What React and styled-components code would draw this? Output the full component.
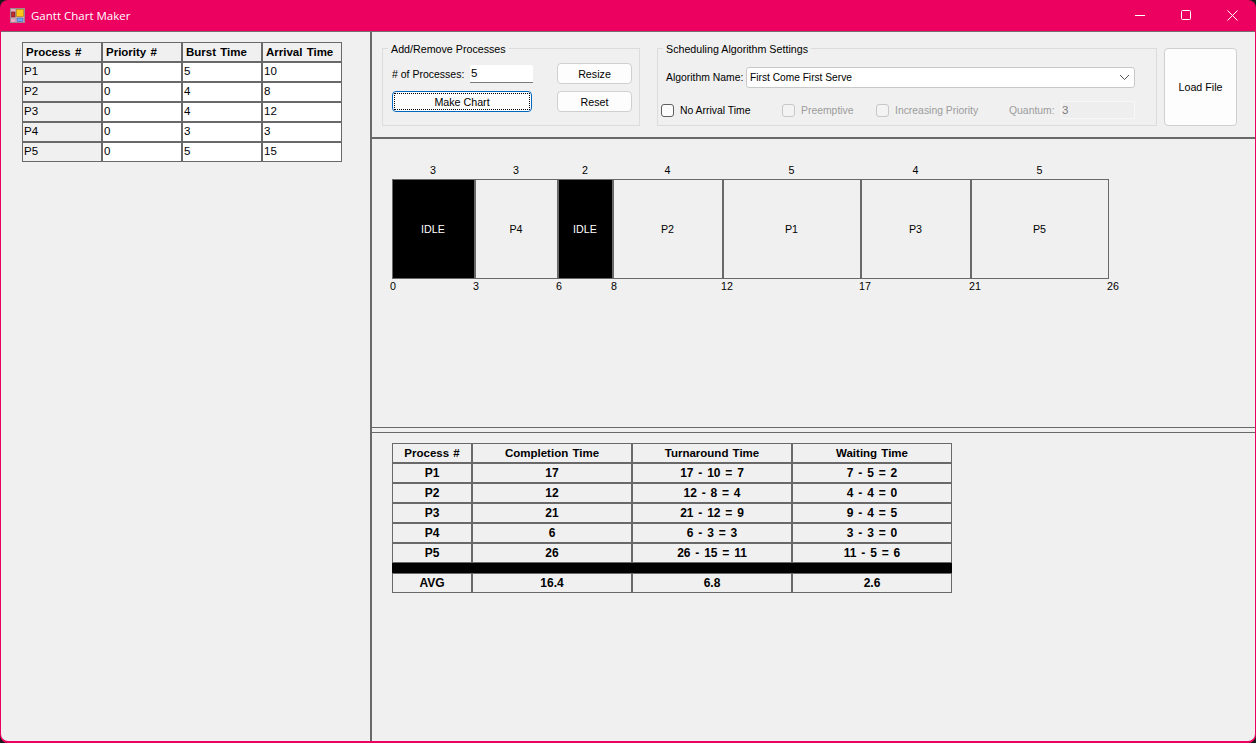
import React from "react";
import styled, { createGlobalStyle } from "styled-components";

const Global = createGlobalStyle`
  html, body { margin: 0; padding: 0; background: #1c1c1c; }
  body { font-family: "Liberation Sans", Arial, sans-serif; font-size: 10.7px; color: #000; }
  * { box-sizing: border-box; }
`;

const Window = styled.div`
  width: 1256px; height: 743px; background: #ec0060; border-radius: 8px;
  display: flex; flex-direction: column; overflow: hidden;
  padding: 0 1px 2px 1px;
`;
const TitleBar = styled.div`
  height: 31px; flex: none; display: flex; align-items: center; color: #fff; padding-left: 9px;
`;
const TitleText = styled.span`
  font-family: "Open Sans", sans-serif; font-size: 11.5px; margin-left: 6px; flex: 1;
`;
const WinButton = styled.div`
  width: 46px; height: 31px; display: flex; align-items: center; justify-content: center;
`;
const Body = styled.div`
  flex: 1; min-height: 0; display: flex; background: #f0f0f0; border-top: 1px solid #7b6a70;
  border-radius: 0 0 7px 7px; overflow: hidden;
`;
const LeftPane = styled.div`
  width: 369px; flex: none; padding: 10px 0 0 21px;
`;
const RightPane = styled.div`
  flex: 1; display: flex; flex-direction: column; border-left: 2px solid #696969;
`;
const TopPanel = styled.div`
  height: 107px; flex: none; display: flex; padding: 16px 0 0 10px; border-bottom: 2px solid #696969;
`;
const Group = styled.div`
  position: relative; height: 78px; border: 1px solid #dcdcdc; flex: none; width: ${p => p.$w}px; margin-right: ${p => p.$mr || 0}px;
`;
const Legend = styled.span`
  position: absolute; top: -6px; left: 5px; padding: 0 3px; background: #f0f0f0; line-height: 12px; white-space: nowrap;
`;
const ProcGroup = styled.div`
  display: flex; padding: 14px 0 0 9px;
`;
const ProcLeft = styled.div`
  width: 165px; display: flex; flex-direction: column; gap: 7px;
`;
const ProcRow = styled.div`
  display: flex; align-items: center; height: 21px; white-space: nowrap;
`;
const FieldLabel = styled.span`
  flex: none; width: ${p => p.$w}px; white-space: nowrap; font-size: ${p => p.$size || 10.7}px;
`;
const NumInput = styled.div`
  width: 63px; height: 18px; background: #fff; border-bottom: 1px solid #7a7a7a; border-radius: 2px 2px 0 0;
  padding: 1px 0 0 1px; line-height: 14px; font-size: 11.5px;
`;
const ProcRight = styled.div`
  display: flex; flex-direction: column; gap: 7px;
`;
const Btn = styled.div`
  display: flex; align-items: center; justify-content: center;
  width: ${p => p.$w}px; height: ${p => p.$h || 21}px; background: #fdfdfd; border: 1px solid #d0d0d0; border-radius: 4px;
  flex: none;
`;
const DefaultBtn = styled(Btn)`
  border-color: #0067c0; position: relative;
  &::after { content: ""; position: absolute; inset: 1px; border: 1px dotted #000; }
`;
const AlgoTop = styled.div`
  display: flex; align-items: center; padding: 18px 0 0 8px; white-space: nowrap;
`;
const Select = styled.div`
  width: 389px; height: 21px; background: #fff; border: 1px solid #c8c8c8; border-radius: 3px;
  display: flex; align-items: center; justify-content: space-between; padding: 0 4px 0 3px; font-size: 10.2px;
`;
const OptRow = styled.div`
  display: flex; align-items: center; height: 18px; margin-top: 13px; padding-left: 3px; white-space: nowrap; font-size: 10.4px;
`;
const Check = styled.label`
  display: flex; align-items: center; width: ${p => p.$w}px; color: ${p => (p.$off ? "#9c9c9c" : "#000")};
`;
const Box = styled.span`
  width: 13px; height: 13px; border-radius: 3px; margin-right: 6px; flex: none;
  border: 1px solid ${p => (p.$off ? "#c8c8c8" : "#5f5f5f")}; background: ${p => (p.$off ? "#f3f3f3" : "#fbfbfb")};
`;
const Quantum = styled.span`
  color: #9c9c9c; flex: none; width: 52px;
`;
const QuantumInput = styled.div`
  width: 74px; height: 18px; background: #eeeeee; border: 1px solid #f7f7f7; color: #7a7a7a;
  padding-left: 0; line-height: 16px; font-size: 11.5px;
`;
const LoadBtn = styled(Btn)`
  width: 73px; height: 78px; margin-left: 7px; border-color: #cfcfcf;
`;
const ChartPanel = styled.div`
  height: 289px; flex: none; padding: 24px 0 0 20px; border-bottom: 1px solid #696969;
`;
const Gantt = styled.div`
  display: flex;
`;
const Slot = styled.div`
  width: ${p => p.$w}px; flex: none; position: relative;
`;
const Duration = styled.div`
  height: 16px; line-height: 14px; text-align: center; padding-right: 1px;
`;
const Bar = styled.div`
  height: 100px; display: flex; align-items: center; justify-content: center; border: 1px solid #696969; padding-right: 1px;
  background: ${p => (p.$idle ? "#000" : "#f0f0f0")}; color: ${p => (p.$idle ? "#fff" : "#000")};
`;
const Tick = styled.span`
  position: absolute; top: 116px; left: ${p => (p.$end ? "100%" : "0")}; margin-left: -2px; line-height: 14px;
`;
const ResultPanel = styled.div`
  flex: 1; margin-top: 4px; border-top: 1px solid #696969; padding: 10px 0 0 20px;
`;
const Grid = styled.div`
  display: grid; grid-template-columns: ${p => p.$cols}; width: max-content;
`;
const Cell = styled.div`
  height: 20px; border: 1px solid #696969; display: flex; align-items: center; line-height: 14px; white-space: pre;
  background: ${p => (p.$white ? "#fff" : "#f0f0f0")};
  justify-content: ${p => (p.$center ? "center" : "flex-start")};
  font-weight: ${p => (p.$bold ? 700 : 400)};
  padding-left: ${p => (p.$center ? 0 : p.$bold ? 3 : 1)}px;
  padding-bottom: ${p => (p.$bold ? 1 : 3)}px;
  font-size: ${p => (p.$value ? 12 : 11.5)}px;
  word-spacing: ${p => (p.$value ? 1.5 : p.$bold ? 1 : 0)}px;
`;
const Spacer = styled.div`
  grid-column: 1 / -1; height: 10px; background: #000;
`;

const inputs = [["P1","0","5","10"],["P2","0","4","8"],["P3","0","4","12"],["P4","0","3","3"],["P5","0","5","15"]];
const segs = [
  { d: 3, w: 83, n: "IDLE", idle: true, t: "0" },
  { d: 3, w: 83, n: "P4", t: "3" },
  { d: 2, w: 55, n: "IDLE", idle: true, t: "6" },
  { d: 4, w: 110, n: "P2", t: "8" },
  { d: 5, w: 138, n: "P1", t: "12" },
  { d: 4, w: 110, n: "P3", t: "17" },
  { d: 5, w: 138, n: "P5", t: "21", end: "26" },
];
const results = [
  ["P1","17","17 - 10 = 7","7 - 5 = 2"],
  ["P2","12","12 - 8 = 4","4 - 4 = 0"],
  ["P3","21","21 - 12 = 9","9 - 4 = 5"],
  ["P4","6","6 - 3 = 3","3 - 3 = 0"],
  ["P5","26","26 - 15 = 11","11 - 5 = 6"],
];

const AppIcon = () => (
  <svg width="15" height="15" viewBox="0 0 15 15">
    <rect x="0.5" y="0.5" width="14" height="14" fill="#efa6c2" stroke="#9a8a90" />
    <path d="M5.5 1v13M1 10.5h13" stroke="#b9a9b0" />
    <rect x="1.5" y="4" width="3.5" height="5" fill="#c62828" stroke="#6b2020" strokeWidth="0.6" />
    <rect x="6.5" y="1.5" width="7" height="7" fill="#ffc61a" stroke="#a87a00" strokeWidth="0.6" />
    <rect x="7" y="10" width="6" height="3.5" fill="#6fa8ef" stroke="#3a66b0" strokeWidth="0.6" />
  </svg>
);

export default function App() {
  return (
    <>
      <Global />
      <Window>
        <TitleBar>
          <AppIcon />
          <TitleText>Gantt Chart Maker</TitleText>
          <WinButton>
            <svg width="11" height="11" viewBox="0 0 11 11"><path d="M0 5.5h10" stroke="#fff" strokeWidth="1" /></svg>
          </WinButton>
          <WinButton>
            <svg width="11" height="11" viewBox="0 0 11 11"><rect x="0.5" y="0.5" width="9" height="9" rx="1" fill="none" stroke="#fff" /></svg>
          </WinButton>
          <WinButton>
            <svg width="11" height="11" viewBox="0 0 11 11"><path d="M0.5 0.5l10 10M10.5 0.5l-10 10" stroke="#fff" strokeWidth="1" /></svg>
          </WinButton>
        </TitleBar>
        <Body>
          <LeftPane>
            <Grid $cols="80px 80px 80px 80px">
              {["Process #","Priority #","Burst Time","Arrival Time"].map(h => <Cell key={h} $bold>{h}</Cell>)}
              {inputs.map(r => r.map((v, i) => <Cell key={r[0] + i} $white={i > 0}>{v}</Cell>))}
            </Grid>
          </LeftPane>
          <RightPane>
            <TopPanel>
              <Group $w={258} $mr={17}>
                <Legend>Add/Remove Processes</Legend>
                <ProcGroup>
                  <ProcLeft>
                    <ProcRow><FieldLabel $w={78} $size={10.5}># of Processes:</FieldLabel><NumInput>5</NumInput></ProcRow>
                    <DefaultBtn $w={140}>Make Chart</DefaultBtn>
                  </ProcLeft>
                  <ProcRight>
                    <Btn $w={75}>Resize</Btn>
                    <Btn $w={75}>Reset</Btn>
                  </ProcRight>
                </ProcGroup>
              </Group>
              <Group $w={500}>
                <Legend>Scheduling Algorithm Settings</Legend>
                <AlgoTop>
                  <FieldLabel $w={80} $size={10.4}>Algorithm Name:</FieldLabel>
                  <Select>
                    First Come First Serve
                    <svg width="11" height="7" viewBox="0 0 11 7"><path d="M1 1l4.5 4.5L10 1" fill="none" stroke="#555" /></svg>
                  </Select>
                </AlgoTop>
                <OptRow>
                  <Check $w={121}><Box />No Arrival Time</Check>
                  <Check $w={94} $off><Box $off />Preemptive</Check>
                  <Check $w={133} $off><Box $off />Increasing Priority</Check>
                  <Quantum>Quantum:</Quantum>
                  <QuantumInput>3</QuantumInput>
                </OptRow>
              </Group>
              <LoadBtn>Load File</LoadBtn>
            </TopPanel>
            <ChartPanel>
              <Gantt>
                {segs.map((s, i) => (
                  <Slot key={i} $w={s.w}>
                    <Duration>{s.d}</Duration>
                    <Bar $idle={s.idle}>{s.n}</Bar>
                    <Tick>{s.t}</Tick>
                    {s.end && <Tick $end>{s.end}</Tick>}
                  </Slot>
                ))}
              </Gantt>
            </ChartPanel>
            <ResultPanel>
              <Grid $cols="80px 160px 160px 160px">
                {["Process #","Completion Time","Turnaround Time","Waiting Time"].map(h => <Cell key={h} $bold $center>{h}</Cell>)}
                {results.map(r => r.map((v, i) => <Cell key={r[0] + i} $bold $center $value>{v}</Cell>))}
                <Spacer />
                {["AVG","16.4","6.8","2.6"].map(h => <Cell key={h} $bold $center $value>{h}</Cell>)}
              </Grid>
            </ResultPanel>
          </RightPane>
        </Body>
      </Window>
    </>
  );
}
